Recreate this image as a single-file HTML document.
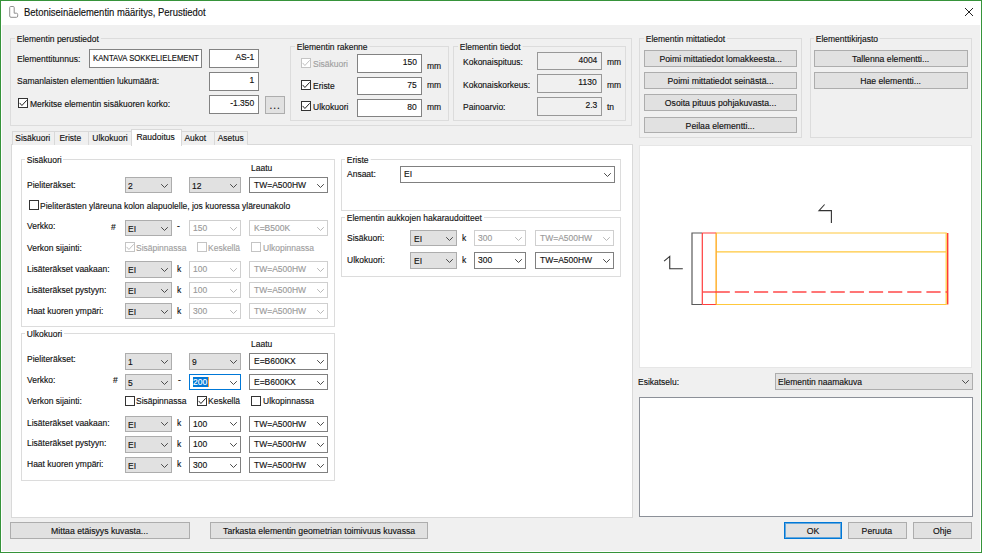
<!DOCTYPE html>
<html lang="fi"><head><meta charset="utf-8"><title>Betoniseinäelementin määritys, Perustiedot</title>
<style>
*{box-sizing:border-box;margin:0;padding:0}
html,body{width:982px;height:553px;overflow:hidden;background:#fff}
body{font-family:"Liberation Sans",sans-serif;font-size:9.6px;color:#111;-webkit-text-stroke-width:0.15px;position:relative}
#win{position:absolute;left:0;top:0;width:982px;height:553px;border:1px solid #36933a;background:#fff}
#client{position:absolute;left:2px;top:25px;width:978px;height:526px;background:#f0f0f0}
#root{position:absolute;left:0;top:0;width:982px;height:553px}
#root>div,.abs{position:absolute}
.title{left:24px;top:5px;height:15px;line-height:15px;font-size:10.5px;transform:scaleX(.9);transform-origin:0 50%;color:#111;white-space:nowrap}
.t{height:14px;line-height:14px;white-space:nowrap;transform:scaleX(.885);transform-origin:0 50%}
.in span,.co span,.bt span,.tab span{display:inline-block;transform:scaleX(.885)}
.in span{transform-origin:100% 50%}
.co span{transform-origin:0 50%}
.bt span,.tab span{transform-origin:50% 50%}
.bt span{transform:scaleX(.905)}
.t.dis{color:#a0a0a0}
.gb{border:1px solid #dcdcdc}
.gl{background:#f0f0f0;padding:0 2px;height:10px;line-height:10px}
.gl.w{background:#fff}
.in{background:#fff;border:1px solid #828282;padding:0 4px 0 4px;white-space:nowrap;overflow:hidden}
.in.ro{background:#f0f0f0;border-color:#989898}
.co{white-space:nowrap;overflow:hidden;padding-left:2.5px}
.co.list{padding-top:1px}
.co.edit,.co.dis,.co.focus{padding-left:3.5px}
.co.list{background:#e1e1e1;border:1px solid #adadad}
.co.edit{background:#fff;border:1px solid #808080}
.co.dis{background:#fff;border:1px solid #cfcfcf;color:#9a9a9a}
.co.focus{background:#fff;border:1px solid #0078d7}
.co .hl{position:absolute;left:3.6px;top:1.6px;width:14.6px;height:10.6px;background:#0078d7}
.co .car{position:absolute;left:18.6px;top:1.6px;width:1px;height:10.6px;background:#f0a040}
.co .ch{position:absolute;right:2px;top:50%;margin-top:-2.5px}
.cb{background:#fff;border:1px solid #333}
.cb.d{border-color:#c4c4c4;background:#fff}
.bt{background:#e1e1e1;border:1px solid #adadad;text-align:center;white-space:nowrap;overflow:hidden}
.bt.df{border:1px solid #0078d7;box-shadow:inset 0 0 0 1px rgba(0,120,215,.55);padding-top:1px}
.page{background:#fff;border:1px solid #d9d9d9}
.tab{background:#f0f0f0;border:1px solid #d9d9d9;border-bottom:none;text-align:center;white-space:nowrap;overflow:hidden}
.tab.selt{background:#fff}
.prev{background:#fff;border:1px solid #e6e6e6}
.lbox{background:#fff;border:1px solid #8c9098}
</style></head>
<body><div id="win"></div><div id="client"></div>
<div id="root">
<svg class="abs" style="left:8px;top:5px" width="12" height="14" viewBox="0 0 12 14"><path d="M2.6 1.5 H5.2 Q6.2 1.5 6.2 2.5 V8.2 H8.5 Q9.7 8.2 9.7 9.6 V11 Q9.7 12.3 8.5 12.3 H3 Q1.7 12.3 1.7 11 V2.5 Q1.7 1.5 2.6 1.5 Z" fill="#fff" stroke="#8f8f8f" stroke-width="1"/></svg>
<div class="title">Betoniseinäelementin määritys, Perustiedot</div>
<svg class="abs" style="left:964px;top:7px" width="10" height="10" viewBox="0 0 10 10"><path d="M1 1 L9 9 M9 1 L1 9" stroke="#222" stroke-width="1" fill="none"/></svg>
<div class="gb" style="left:10px;top:38.4px;width:622px;height:87.6px;"></div>
<div class="t gl" style="left:15px;top:34.4px">Elementin perustiedot</div>
<div class="t " style="left:17px;top:52px;">Elementtitunnus:</div>
<div class="in" style="left:88.6px;top:49px;width:113.4px;height:19px;text-align:left;line-height:14.4px;"><span style="transform:scaleX(.807);transform-origin:0 50%;position:relative;top:.8px;left:-1px">KANTAVA SOKKELIELEMENT</span></div>
<div class="in" style="left:208.5px;top:49px;width:50.5px;height:19px;text-align:right;line-height:14.4px;"><span>AS-1</span></div>
<div class="t " style="left:17px;top:74px;">Samanlaisten elementtien lukumäärä:</div>
<div class="in" style="left:208.5px;top:72px;width:50.5px;height:18.6px;text-align:right;line-height:14.4px;"><span>1</span></div>
<div class="cb" style="left:18px;top:98px;width:10px;height:10px;"><svg width="10" height="10" viewBox="0 0 10 10" style="position:absolute;left:-1px;top:-1px"><path d="M1.6 4.9 L3.9 7.5 L8.7 2.3" fill="none" stroke="#222" stroke-width="1"/></svg></div>
<div class="t " style="left:29.75px;top:96.5px;">Merkitse elementin sisäkuoren korko:</div>
<div class="in" style="left:208.5px;top:95px;width:50.5px;height:18.6px;text-align:right;line-height:14.4px;"><span>-1.350</span></div>
<div class="bt" style="left:265px;top:96px;width:20px;height:17.6px;line-height:16.6px;"><span style="font-size:11px;letter-spacing:1px;position:relative;top:-.5px;left:.5px">...</span></div>
<div class="gb" style="left:290px;top:46px;width:158.6px;height:75px;"></div>
<div class="t gl" style="left:295px;top:42px">Elementin rakenne</div>
<div class="cb d" style="left:301px;top:58px;width:10px;height:10px;"><svg width="10" height="10" viewBox="0 0 10 10" style="position:absolute;left:-1px;top:-1px"><path d="M1.6 4.9 L3.9 7.5 L8.7 2.3" fill="none" stroke="#c0c0c0" stroke-width="1"/></svg></div>
<div class="t dis" style="left:312.5px;top:56.5px;">Sisäkuori</div>
<div class="in" style="left:357px;top:54px;width:65px;height:18.5px;text-align:right;line-height:14.4px;"><span>150</span></div>
<div class="t " style="left:426.75px;top:58.5px;">mm</div>
<div class="cb" style="left:301px;top:80px;width:10px;height:10px;"><svg width="10" height="10" viewBox="0 0 10 10" style="position:absolute;left:-1px;top:-1px"><path d="M1.6 4.9 L3.9 7.5 L8.7 2.3" fill="none" stroke="#222" stroke-width="1"/></svg></div>
<div class="t " style="left:312.5px;top:78.5px;">Eriste</div>
<div class="in" style="left:357px;top:77px;width:65px;height:17.5px;text-align:right;line-height:14.4px;"><span>75</span></div>
<div class="t " style="left:426.75px;top:77.8px;">mm</div>
<div class="cb" style="left:301px;top:101px;width:10px;height:10px;"><svg width="10" height="10" viewBox="0 0 10 10" style="position:absolute;left:-1px;top:-1px"><path d="M1.6 4.9 L3.9 7.5 L8.7 2.3" fill="none" stroke="#222" stroke-width="1"/></svg></div>
<div class="t " style="left:312.5px;top:99.5px;">Ulkokuori</div>
<div class="in" style="left:357px;top:99px;width:65px;height:18.4px;text-align:right;line-height:14.4px;"><span>80</span></div>
<div class="t " style="left:426.75px;top:99.8px;">mm</div>
<div class="gb" style="left:453px;top:46px;width:172.5px;height:75px;"></div>
<div class="t gl" style="left:458px;top:42px">Elementin tiedot</div>
<div class="t " style="left:462.5px;top:54.5px;">Kokonaispituus:</div>
<div class="in ro" style="left:537px;top:52px;width:65px;height:18px;text-align:right;line-height:14.4px;"><span>4004</span></div>
<div class="t " style="left:606.75px;top:54.5px;">mm</div>
<div class="t " style="left:462.5px;top:78px;">Kokonaiskorkeus:</div>
<div class="in ro" style="left:537px;top:74px;width:65px;height:18.5px;text-align:right;line-height:14.4px;"><span>1130</span></div>
<div class="t " style="left:606.75px;top:78px;">mm</div>
<div class="t " style="left:462.5px;top:100px;">Painoarvio:</div>
<div class="in ro" style="left:537px;top:97px;width:65px;height:18.5px;text-align:right;line-height:14.4px;"><span>2.3</span></div>
<div class="t " style="left:606.75px;top:100px;">tn</div>
<div class="gb" style="left:639px;top:38px;width:162.5px;height:100px;"></div>
<div class="t gl" style="left:643.5px;top:34px">Elementin mittatiedot</div>
<div class="bt" style="left:643.75px;top:50px;width:153.25px;height:17px;line-height:16px;"><span>Poimi mittatiedot lomakkeesta...</span></div>
<div class="bt" style="left:643.75px;top:72px;width:153.25px;height:17px;line-height:16px;"><span>Poimi mittatiedot seinästä...</span></div>
<div class="bt" style="left:643.75px;top:94px;width:153.25px;height:17px;line-height:16px;"><span>Osoita pituus pohjakuvasta...</span></div>
<div class="bt" style="left:643.75px;top:117px;width:153.25px;height:16px;line-height:15px;"><span>Peilaa elementti...</span></div>
<div class="gb" style="left:809.5px;top:38px;width:162.5px;height:100px;"></div>
<div class="t gl" style="left:813.5px;top:34px">Elementtikirjasto</div>
<div class="bt" style="left:814px;top:50px;width:153.75px;height:17px;line-height:16px;"><span>Tallenna elementti...</span></div>
<div class="bt" style="left:814px;top:72px;width:153.75px;height:17px;line-height:16px;"><span>Hae elementti...</span></div>
<div class="page" style="left:10.5px;top:144px;width:622.5px;height:374px;"></div>
<div class="tab" style="left:11.5px;top:131px;width:43.8px;height:14px;line-height:12.5px;"><span style="position:relative;left:-1px">Sisäkuori</span></div>
<div class="tab" style="left:54.3px;top:131px;width:34.9px;height:14px;line-height:12.5px;"><span style="position:relative;left:-1.5px">Eriste</span></div>
<div class="tab" style="left:88.2px;top:131px;width:43.8px;height:14px;line-height:12.5px;"><span style="position:relative;left:0px">Ulkokuori</span></div>
<div class="tab" style="left:181.3px;top:131px;width:33.3px;height:14px;line-height:12.5px;"><span style="position:relative;left:-2.5px">Aukot</span></div>
<div class="tab" style="left:213.6px;top:131px;width:34.9px;height:14px;line-height:12.5px;"><span style="position:relative;left:0px">Asetus</span></div>
<div class="tab selt" style="left:131px;top:129px;width:51.3px;height:17px;line-height:13px;"><span style="position:relative;left:-1px">Raudoitus</span></div>
<div class="gb" style="left:21px;top:159px;width:314px;height:168px;"></div>
<div class="t gl w" style="left:25.3px;top:155px">Sisäkuori</div>
<div class="t " style="left:251.25px;top:160.5px;">Laatu</div>
<div class="t " style="left:27px;top:178px;">Pieliteräkset:</div>
<div class="co list" style="left:124.5px;top:177px;width:47px;height:16px;line-height:14px;"><span>2</span><svg class="ch" width="9" height="6" viewBox="0 0 9 6"><path d="M1.2 1.2 L4.5 4.5 L7.8 1.2" fill="none" stroke="#4a4a4a" stroke-width="1"/></svg></div>
<div class="co list" style="left:188.5px;top:177px;width:52px;height:16px;line-height:14px;"><span>12</span><svg class="ch" width="9" height="6" viewBox="0 0 9 6"><path d="M1.2 1.2 L4.5 4.5 L7.8 1.2" fill="none" stroke="#4a4a4a" stroke-width="1"/></svg></div>
<div class="co edit" style="left:249px;top:177px;width:79.25px;height:16px;line-height:14px;"><span>TW=A500HW</span><svg class="ch" width="9" height="6" viewBox="0 0 9 6"><path d="M1.2 1.2 L4.5 4.5 L7.8 1.2" fill="none" stroke="#4a4a4a" stroke-width="1"/></svg></div>
<div class="cb" style="left:29px;top:200px;width:10px;height:10px;"></div>
<div class="t " style="left:40px;top:198.5px;">Pieliterästen yläreuna kolon alapuolelle, jos kuoressa yläreunakolo</div>
<div class="t " style="left:27px;top:219px;">Verkko:</div>
<div class="t " style="left:111px;top:219.5px;">#</div>
<div class="co list" style="left:124.5px;top:220px;width:47px;height:16px;line-height:14px;"><span>EI</span><svg class="ch" width="9" height="6" viewBox="0 0 9 6"><path d="M1.2 1.2 L4.5 4.5 L7.8 1.2" fill="none" stroke="#4a4a4a" stroke-width="1"/></svg></div>
<div class="t " style="left:177px;top:219px;">-</div>
<div class="co dis" style="left:188.5px;top:220px;width:52px;height:16px;line-height:14px;"><span>150</span><svg class="ch" width="9" height="6" viewBox="0 0 9 6"><path d="M1.2 1.2 L4.5 4.5 L7.8 1.2" fill="none" stroke="#b8b8b8" stroke-width="1"/></svg></div>
<div class="co dis" style="left:249px;top:220px;width:79.25px;height:16px;line-height:14px;"><span>K=B500K</span><svg class="ch" width="9" height="6" viewBox="0 0 9 6"><path d="M1.2 1.2 L4.5 4.5 L7.8 1.2" fill="none" stroke="#b8b8b8" stroke-width="1"/></svg></div>
<div class="t " style="left:27px;top:240.5px;">Verkon sijainti:</div>
<div class="cb d" style="left:125px;top:242.4px;width:10px;height:10px;"><svg width="10" height="10" viewBox="0 0 10 10" style="position:absolute;left:-1px;top:-1px"><path d="M1.6 4.9 L3.9 7.5 L8.7 2.3" fill="none" stroke="#c0c0c0" stroke-width="1"/></svg></div>
<div class="t dis" style="left:136.4px;top:240.5px;">Sisäpinnassa</div>
<div class="cb d" style="left:197px;top:242.4px;width:10px;height:10px;"></div>
<div class="t dis" style="left:208.2px;top:240.5px;">Keskellä</div>
<div class="cb d" style="left:251px;top:242.4px;width:10px;height:10px;"></div>
<div class="t dis" style="left:263.25px;top:240.5px;">Ulkopinnassa</div>
<div class="t " style="left:27px;top:262.38px;">Lisäteräkset vaakaan:</div>
<div class="co list" style="left:124.5px;top:261.25px;width:47px;height:16.25px;line-height:14.25px;"><span>EI</span><svg class="ch" width="9" height="6" viewBox="0 0 9 6"><path d="M1.2 1.2 L4.5 4.5 L7.8 1.2" fill="none" stroke="#4a4a4a" stroke-width="1"/></svg></div>
<div class="t " style="left:177px;top:261.88px;">k</div>
<div class="co dis" style="left:188.5px;top:261.25px;width:52px;height:16.25px;line-height:14.25px;"><span>100</span><svg class="ch" width="9" height="6" viewBox="0 0 9 6"><path d="M1.2 1.2 L4.5 4.5 L7.8 1.2" fill="none" stroke="#b8b8b8" stroke-width="1"/></svg></div>
<div class="co dis" style="left:249px;top:261.25px;width:79.25px;height:16.25px;line-height:14.25px;"><span>TW=A500HW</span><svg class="ch" width="9" height="6" viewBox="0 0 9 6"><path d="M1.2 1.2 L4.5 4.5 L7.8 1.2" fill="none" stroke="#b8b8b8" stroke-width="1"/></svg></div>
<div class="t " style="left:27px;top:283.12px;">Lisäteräkset pystyyn:</div>
<div class="co list" style="left:124.5px;top:282px;width:47px;height:16.25px;line-height:14.25px;"><span>EI</span><svg class="ch" width="9" height="6" viewBox="0 0 9 6"><path d="M1.2 1.2 L4.5 4.5 L7.8 1.2" fill="none" stroke="#4a4a4a" stroke-width="1"/></svg></div>
<div class="t " style="left:177px;top:282.62px;">k</div>
<div class="co dis" style="left:188.5px;top:282px;width:52px;height:16.25px;line-height:14.25px;"><span>100</span><svg class="ch" width="9" height="6" viewBox="0 0 9 6"><path d="M1.2 1.2 L4.5 4.5 L7.8 1.2" fill="none" stroke="#b8b8b8" stroke-width="1"/></svg></div>
<div class="co dis" style="left:249px;top:282px;width:79.25px;height:16.25px;line-height:14.25px;"><span>TW=A500HW</span><svg class="ch" width="9" height="6" viewBox="0 0 9 6"><path d="M1.2 1.2 L4.5 4.5 L7.8 1.2" fill="none" stroke="#b8b8b8" stroke-width="1"/></svg></div>
<div class="t " style="left:27px;top:304.12px;">Haat kuoren ympäri:</div>
<div class="co list" style="left:124.5px;top:303px;width:47px;height:16.25px;line-height:14.25px;"><span>EI</span><svg class="ch" width="9" height="6" viewBox="0 0 9 6"><path d="M1.2 1.2 L4.5 4.5 L7.8 1.2" fill="none" stroke="#4a4a4a" stroke-width="1"/></svg></div>
<div class="t " style="left:177px;top:303.62px;">k</div>
<div class="co dis" style="left:188.5px;top:303px;width:52px;height:16.25px;line-height:14.25px;"><span>300</span><svg class="ch" width="9" height="6" viewBox="0 0 9 6"><path d="M1.2 1.2 L4.5 4.5 L7.8 1.2" fill="none" stroke="#b8b8b8" stroke-width="1"/></svg></div>
<div class="co dis" style="left:249px;top:303px;width:79.25px;height:16.25px;line-height:14.25px;"><span>TW=A500HW</span><svg class="ch" width="9" height="6" viewBox="0 0 9 6"><path d="M1.2 1.2 L4.5 4.5 L7.8 1.2" fill="none" stroke="#b8b8b8" stroke-width="1"/></svg></div>
<div class="gb" style="left:21px;top:333px;width:314px;height:147.75px;"></div>
<div class="t gl w" style="left:25.3px;top:329px">Ulkokuori</div>
<div class="t " style="left:251.25px;top:336.75px;">Laatu</div>
<div class="t " style="left:27px;top:352px;">Pieliteräkset:</div>
<div class="co list" style="left:124.5px;top:353.25px;width:47px;height:16.25px;line-height:14.25px;"><span>1</span><svg class="ch" width="9" height="6" viewBox="0 0 9 6"><path d="M1.2 1.2 L4.5 4.5 L7.8 1.2" fill="none" stroke="#4a4a4a" stroke-width="1"/></svg></div>
<div class="co list" style="left:188.5px;top:353.25px;width:52px;height:16.25px;line-height:14.25px;"><span>9</span><svg class="ch" width="9" height="6" viewBox="0 0 9 6"><path d="M1.2 1.2 L4.5 4.5 L7.8 1.2" fill="none" stroke="#4a4a4a" stroke-width="1"/></svg></div>
<div class="co edit" style="left:249px;top:353.25px;width:79.25px;height:16.25px;line-height:14.25px;"><span>E=B600KX</span><svg class="ch" width="9" height="6" viewBox="0 0 9 6"><path d="M1.2 1.2 L4.5 4.5 L7.8 1.2" fill="none" stroke="#4a4a4a" stroke-width="1"/></svg></div>
<div class="t " style="left:27px;top:372.5px;">Verkko:</div>
<div class="t " style="left:113px;top:372.5px;">#</div>
<div class="co list" style="left:124.5px;top:374px;width:47px;height:16px;line-height:14px;"><span>5</span><svg class="ch" width="9" height="6" viewBox="0 0 9 6"><path d="M1.2 1.2 L4.5 4.5 L7.8 1.2" fill="none" stroke="#4a4a4a" stroke-width="1"/></svg></div>
<div class="t " style="left:177.5px;top:372.5px;">-</div>
<div class="co focus" style="left:188.5px;top:374px;width:52px;height:16px;line-height:14px;"><i class="hl"></i><span style="color:#fff;position:relative">200</span><i class="car"></i><svg class="ch" width="9" height="6" viewBox="0 0 9 6"><path d="M1.2 1.2 L4.5 4.5 L7.8 1.2" fill="none" stroke="#4a4a4a" stroke-width="1"/></svg></div>
<div class="co edit" style="left:249px;top:374px;width:79.25px;height:16px;line-height:14px;"><span>E=B600KX</span><svg class="ch" width="9" height="6" viewBox="0 0 9 6"><path d="M1.2 1.2 L4.5 4.5 L7.8 1.2" fill="none" stroke="#4a4a4a" stroke-width="1"/></svg></div>
<div class="t " style="left:27px;top:394px;">Verkon sijainti:</div>
<div class="cb" style="left:125px;top:396px;width:10px;height:10px;"></div>
<div class="t " style="left:136.4px;top:394px;">Sisäpinnassa</div>
<div class="cb" style="left:197px;top:396px;width:10px;height:10px;"><svg width="10" height="10" viewBox="0 0 10 10" style="position:absolute;left:-1px;top:-1px"><path d="M1.6 4.9 L3.9 7.5 L8.7 2.3" fill="none" stroke="#222" stroke-width="1"/></svg></div>
<div class="t " style="left:208.2px;top:394px;">Keskellä</div>
<div class="cb" style="left:251px;top:396px;width:10px;height:10px;"></div>
<div class="t " style="left:263.25px;top:394px;">Ulkopinnassa</div>
<div class="t " style="left:27px;top:415.62px;">Lisäteräkset vaakaan:</div>
<div class="co list" style="left:124.5px;top:415.5px;width:47px;height:16.25px;line-height:14.25px;"><span>EI</span><svg class="ch" width="9" height="6" viewBox="0 0 9 6"><path d="M1.2 1.2 L4.5 4.5 L7.8 1.2" fill="none" stroke="#4a4a4a" stroke-width="1"/></svg></div>
<div class="t " style="left:177px;top:415.93px;">k</div>
<div class="co edit" style="left:188.5px;top:415.5px;width:52px;height:16.25px;line-height:14.25px;"><span>100</span><svg class="ch" width="9" height="6" viewBox="0 0 9 6"><path d="M1.2 1.2 L4.5 4.5 L7.8 1.2" fill="none" stroke="#4a4a4a" stroke-width="1"/></svg></div>
<div class="co edit" style="left:249px;top:415.5px;width:79.25px;height:16.25px;line-height:14.25px;"><span>TW=A500HW</span><svg class="ch" width="9" height="6" viewBox="0 0 9 6"><path d="M1.2 1.2 L4.5 4.5 L7.8 1.2" fill="none" stroke="#4a4a4a" stroke-width="1"/></svg></div>
<div class="t " style="left:27px;top:436.38px;">Lisäteräkset pystyyn:</div>
<div class="co list" style="left:124.5px;top:436.25px;width:47px;height:16.25px;line-height:14.25px;"><span>EI</span><svg class="ch" width="9" height="6" viewBox="0 0 9 6"><path d="M1.2 1.2 L4.5 4.5 L7.8 1.2" fill="none" stroke="#4a4a4a" stroke-width="1"/></svg></div>
<div class="t " style="left:177px;top:436.68px;">k</div>
<div class="co edit" style="left:188.5px;top:436.25px;width:52px;height:16.25px;line-height:14.25px;"><span>100</span><svg class="ch" width="9" height="6" viewBox="0 0 9 6"><path d="M1.2 1.2 L4.5 4.5 L7.8 1.2" fill="none" stroke="#4a4a4a" stroke-width="1"/></svg></div>
<div class="co edit" style="left:249px;top:436.25px;width:79.25px;height:16.25px;line-height:14.25px;"><span>TW=A500HW</span><svg class="ch" width="9" height="6" viewBox="0 0 9 6"><path d="M1.2 1.2 L4.5 4.5 L7.8 1.2" fill="none" stroke="#4a4a4a" stroke-width="1"/></svg></div>
<div class="t " style="left:27px;top:457.12px;">Haat kuoren ympäri:</div>
<div class="co list" style="left:124.5px;top:457px;width:47px;height:16.25px;line-height:14.25px;"><span>EI</span><svg class="ch" width="9" height="6" viewBox="0 0 9 6"><path d="M1.2 1.2 L4.5 4.5 L7.8 1.2" fill="none" stroke="#4a4a4a" stroke-width="1"/></svg></div>
<div class="t " style="left:177px;top:457.43px;">k</div>
<div class="co edit" style="left:188.5px;top:457px;width:52px;height:16.25px;line-height:14.25px;"><span>300</span><svg class="ch" width="9" height="6" viewBox="0 0 9 6"><path d="M1.2 1.2 L4.5 4.5 L7.8 1.2" fill="none" stroke="#4a4a4a" stroke-width="1"/></svg></div>
<div class="co edit" style="left:249px;top:457px;width:79.25px;height:16.25px;line-height:14.25px;"><span>TW=A500HW</span><svg class="ch" width="9" height="6" viewBox="0 0 9 6"><path d="M1.2 1.2 L4.5 4.5 L7.8 1.2" fill="none" stroke="#4a4a4a" stroke-width="1"/></svg></div>
<div class="gb" style="left:340.75px;top:159px;width:280.5px;height:52px;"></div>
<div class="t gl w" style="left:345px;top:155px">Eriste</div>
<div class="t " style="left:347px;top:167px;">Ansaat:</div>
<div class="co edit" style="left:399.5px;top:166.25px;width:215px;height:16.25px;line-height:14.25px;"><span>EI</span><svg class="ch" width="9" height="6" viewBox="0 0 9 6"><path d="M1.2 1.2 L4.5 4.5 L7.8 1.2" fill="none" stroke="#4a4a4a" stroke-width="1"/></svg></div>
<div class="gb" style="left:340.75px;top:217px;width:280.5px;height:59.5px;"></div>
<div class="t gl w" style="left:345px;top:213px">Elementin aukkojen hakaraudoitteet</div>
<div class="t " style="left:347px;top:230.5px;">Sisäkuori:</div>
<div class="co list" style="left:410px;top:230px;width:47px;height:16.25px;line-height:14.25px;"><span>EI</span><svg class="ch" width="9" height="6" viewBox="0 0 9 6"><path d="M1.2 1.2 L4.5 4.5 L7.8 1.2" fill="none" stroke="#4a4a4a" stroke-width="1"/></svg></div>
<div class="t " style="left:462px;top:231.2px;">k</div>
<div class="co dis" style="left:473.75px;top:230px;width:52px;height:16.25px;line-height:14.25px;"><span>300</span><svg class="ch" width="9" height="6" viewBox="0 0 9 6"><path d="M1.2 1.2 L4.5 4.5 L7.8 1.2" fill="none" stroke="#b8b8b8" stroke-width="1"/></svg></div>
<div class="co dis" style="left:535px;top:230px;width:78.75px;height:16.25px;line-height:14.25px;"><span>TW=A500HW</span><svg class="ch" width="9" height="6" viewBox="0 0 9 6"><path d="M1.2 1.2 L4.5 4.5 L7.8 1.2" fill="none" stroke="#b8b8b8" stroke-width="1"/></svg></div>
<div class="t " style="left:347px;top:252.5px;">Ulkokuori:</div>
<div class="co list" style="left:410px;top:252px;width:47px;height:16.5px;line-height:14.5px;"><span>EI</span><svg class="ch" width="9" height="6" viewBox="0 0 9 6"><path d="M1.2 1.2 L4.5 4.5 L7.8 1.2" fill="none" stroke="#4a4a4a" stroke-width="1"/></svg></div>
<div class="t " style="left:462px;top:252.6px;">k</div>
<div class="co edit" style="left:473.75px;top:252px;width:52px;height:16.5px;line-height:14.5px;"><span>300</span><svg class="ch" width="9" height="6" viewBox="0 0 9 6"><path d="M1.2 1.2 L4.5 4.5 L7.8 1.2" fill="none" stroke="#4a4a4a" stroke-width="1"/></svg></div>
<div class="co edit" style="left:535px;top:252px;width:78.75px;height:16.5px;line-height:14.5px;"><span>TW=A500HW</span><svg class="ch" width="9" height="6" viewBox="0 0 9 6"><path d="M1.2 1.2 L4.5 4.5 L7.8 1.2" fill="none" stroke="#4a4a4a" stroke-width="1"/></svg></div>
<div class="prev" style="left:639px;top:144.5px;width:333px;height:223px;"></div>
<svg class="abs" style="left:639px;top:144px" width="333" height="224" viewBox="639 144 333 224">
<g fill="none" stroke-width="1.2">
<path d="M702.3 233 H692 V304.5 H702.3" stroke="#5a5a5a"/>
<path d="M716.2 233 H946.2 V304.5 H716.2 Z M716.2 251.9 H946.2" stroke="#ffc83c"/>
<path d="M702.3 233 H716.2 M702.3 304.5 H716.2 M702.3 233 V304.5" stroke="#ff3c3c"/>
<path d="M947.7 233 V304.5" stroke="#ff3838" stroke-width="1.4"/>
<path d="M716.2 233 V304.5" stroke="#ffb03c"/>
<path d="M702.3 292 H716" stroke="#ff4848" stroke-width="1.4"/>
<path d="M715.64 292 H947.7" stroke="#ff4848" stroke-width="1.4" stroke-dasharray="14.2 4.96"/>
<path d="M824.6 204.5 L819 210.6 H831.4 V223" stroke="#333" stroke-width="1.1"/>
<path d="M664.1 261.2 L669.75 256.4 V268.75 H682.8" stroke="#333" stroke-width="1.1"/>
</g></svg>
<div class="t " style="left:638px;top:374.75px;">Esikatselu:</div>
<div class="co list" style="left:774.5px;top:373.25px;width:198.3px;height:16.25px;line-height:14.25px;"><span>Elementin naamakuva</span><svg class="ch" width="9" height="6" viewBox="0 0 9 6"><path d="M1.2 1.2 L4.5 4.5 L7.8 1.2" fill="none" stroke="#4a4a4a" stroke-width="1"/></svg></div>
<div class="lbox" style="left:639px;top:397px;width:333.6px;height:119.5px;"></div>
<div class="bt" style="left:10px;top:522px;width:179.5px;height:17px;line-height:16px;"><span>Mittaa etäisyys kuvasta...</span></div>
<div class="bt" style="left:210px;top:522px;width:218px;height:17px;line-height:16px;"><span>Tarkasta elementin geometrian toimivuus kuvassa</span></div>
<div class="bt df" style="left:783.5px;top:522px;width:58.5px;height:17px;line-height:14px;"><span>OK</span></div>
<div class="bt" style="left:848px;top:522px;width:58.5px;height:17px;line-height:16px;"><span>Peruuta</span></div>
<div class="bt" style="left:912.5px;top:522px;width:59px;height:17px;line-height:16px;"><span>Ohje</span></div>
</div></body></html>
